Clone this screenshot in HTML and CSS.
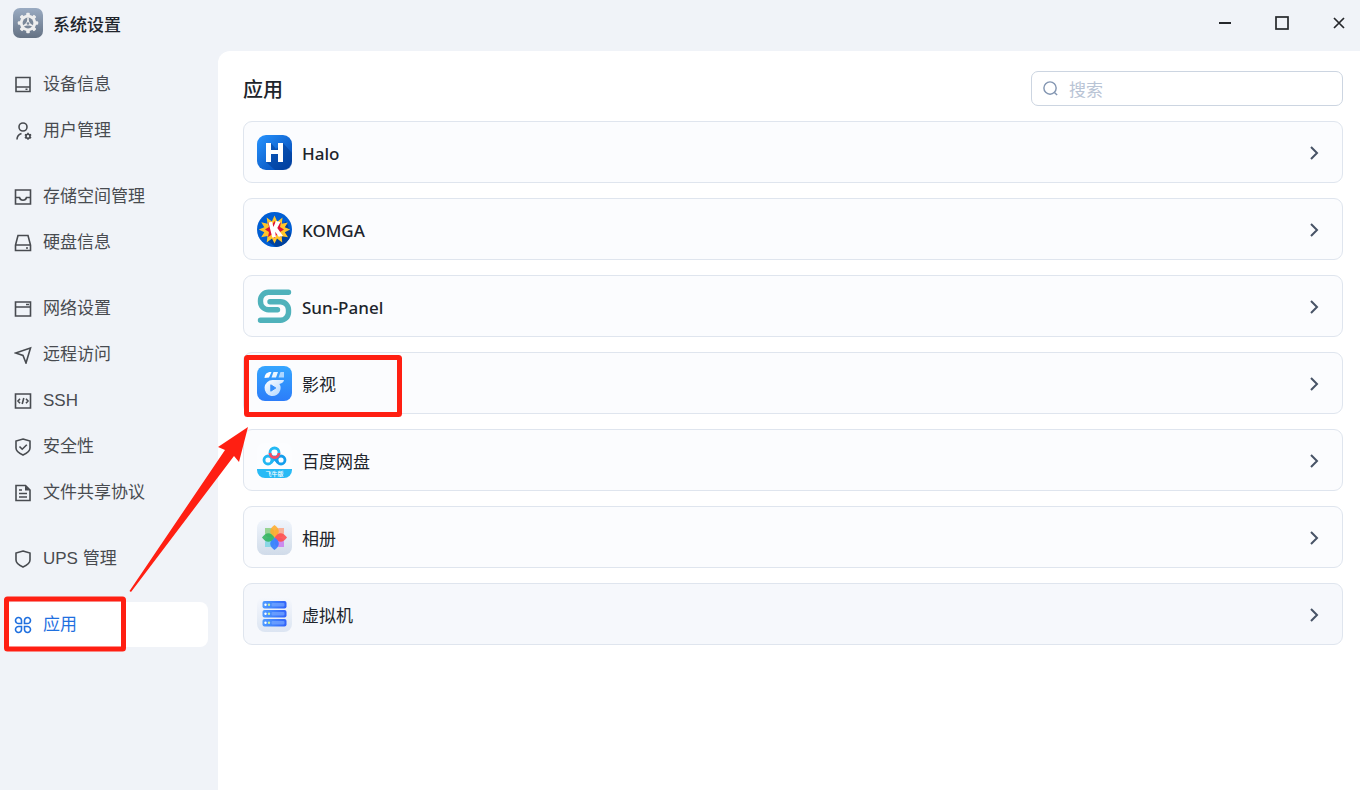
FILE: index.html
```html
<!DOCTYPE html>
<html lang="zh-CN">
<head>
<meta charset="utf-8">
<meta name="viewport" content="width=device-width, initial-scale=1">
<title>系统设置</title>
<link rel="stylesheet" href="styles.css">
</head>
<body>
<div class="window">
  <header class="titlebar">
    <svg class="app-logo" viewBox="0 0 30 30" aria-hidden="true">
      <defs><linearGradient id="logo-bg" x1="0" y1="0" x2="0" y2="1"><stop offset="0" stop-color="#9aabc2"/><stop offset="1" stop-color="#657284"/></linearGradient></defs>
      <rect width="30" height="30" rx="7" fill="url(#logo-bg)"/>
      <g fill="#eeeeee">
        <g id="teeth"><rect x="13.2" y="4.800" width="3.600" height="20.400" rx="1"/><rect x="4.800" y="13.200" width="20.400" height="3.600" rx="1"/></g>
        <use href="#teeth" transform="rotate(45 15 15)"/>
        <circle cx="15" cy="15" r="8.200"/>
      </g>
      <circle cx="15" cy="15" r="5.400" fill="#7a8798"/>
      <path d="M15 9.500v4M10.300 18l3.500-2M19.700 18l-3.500-2" fill="none" stroke="#eee" stroke-width="1.600"/>
      <path d="M15 11.500 18.500 17.600H11.500z" fill="#eee"/>
      <circle cx="15" cy="15.500" r="1.300" fill="#7a8798"/>
    </svg>
    <h1 class="window-title">系统设置</h1>
    <div class="window-controls">
      <button class="control" type="button" aria-label="最小化"><svg viewBox="0 0 16 16"><path d="M2 8h12" stroke-width="2"/></svg></button>
      <button class="control" type="button" aria-label="最大化"><svg viewBox="0 0 16 16"><rect x="2" y="2" width="12" height="12" stroke-width="1.700"/></svg></button>
      <button class="control" type="button" aria-label="关闭"><svg viewBox="0 0 16 16"><path d="M3 3l10 10M13 3 3 13" stroke-width="1.700"/></svg></button>
    </div>
  </header>

  <nav class="sidebar" aria-label="设置">
    <div class="nav-group">
      <a class="nav-item" href="#device"><svg class="nav-icon" viewBox="0 0 18 18"><path d="M2 1.500h14v14H2zM2 11h14M11.500 13.300h2"/></svg>设备信息</a>
      <a class="nav-item" href="#users"><svg class="nav-icon" viewBox="0 0 18 18"><circle cx="9" cy="5" r="4"/><path d="M3 17.500c0-3 1.500-5 4.500-6"/><path d="M14 10.700v1.600M14 16.200v1.600M10.900 12.500l1.400.8M15.700 15.200l1.400.8M17.100 12.500l-1.400.8M12.300 15.200l-1.400.8"/><circle cx="14" cy="14.200" r="2"/></svg>用户管理</a>
    </div>
    <div class="nav-group">
      <a class="nav-item" href="#storage"><svg class="nav-icon" viewBox="0 0 18 18"><path d="M1.500 2h15v14h-15zM1.500 9.500h4c.5 2 1.800 2.700 3.500 2.700s3-.7 3.500-2.700h4"/></svg>存储空间管理</a>
      <a class="nav-item" href="#disk"><svg class="nav-icon" viewBox="0 0 18 18"><path d="M4 1.500h10l2.500 9.500v5.500h-15V11zM1.500 11h15M12 14h2"/></svg>硬盘信息</a>
    </div>
    <div class="nav-group">
      <a class="nav-item" href="#network"><svg class="nav-icon" viewBox="0 0 18 18"><path d="M1.500 2h15v14h-15zM1.500 7h15M12 4.500h3"/></svg>网络设置</a>
      <a class="nav-item" href="#remote"><svg class="nav-icon" viewBox="0 0 18 18"><path d="M16.500 2 12 17 9 9.500 1.500 7z"/></svg>远程访问</a>
      <a class="nav-item" href="#ssh"><svg class="nav-icon" viewBox="0 0 18 18"><path d="M1.500 2h15v14h-15zM6 6.800 4 9l2 2.200M12 6.800 14 9l-2 2.200M9.800 6 8.200 12"/></svg>SSH</a>
      <a class="nav-item" href="#security"><svg class="nav-icon" viewBox="0 0 18 18"><path d="M9 1 16 3v7c0 3-2.500 5-7 7-4.500-2-7-4-7-7V3zM5.500 8.500l2.700 2.700 4.600-4.500"/></svg>安全性</a>
      <a class="nav-item" href="#sharing"><svg class="nav-icon" viewBox="0 0 18 18"><path d="M2 1.500h9.500L16 6v10.500H2zM5 6h3M5 9.500h8M5 13h8"/><path class="solid" d="M11 1.500 16 6.500h-5z"/></svg>文件共享协议</a>
    </div>
    <div class="nav-group">
      <a class="nav-item" href="#ups"><svg class="nav-icon" viewBox="0 0 18 18"><path d="M9 1 16 3v7c0 3-2.500 5-7 7-4.500-2-7-4-7-7V3z"/></svg>UPS 管理</a>
    </div>
    <div class="nav-group">
      <a class="nav-item active" href="#apps" aria-current="page"><svg class="nav-icon" viewBox="0 0 18 18"><path d="M7.500 7.500H4.700a3 3 0 1 1 2.800-3zM10.500 7.500h2.800a3 3 0 1 0-2.800-3zM7.500 10.500H4.700a3 3 0 1 0 2.800 3zM10.500 10.500h2.800a3 3 0 1 1-2.800 3z"/></svg>应用</a>
    </div>
  </nav>

  <main class="content">
    <div class="content-head">
      <h2 class="page-title">应用</h2>
      <label class="search">
        <svg class="search-icon" viewBox="0 0 18 18" aria-hidden="true"><circle cx="8.500" cy="8.500" r="6.500"/><path d="M13.200 13.200 16 16"/></svg>
        <input class="search-input" type="search" placeholder="搜索" aria-label="搜索">
      </label>
    </div>
    <div class="app-list">
      <button class="app-card" type="button">
        <svg class="app-icon" viewBox="0 0 35 35"><defs><linearGradient id="halo" x1="0" y1="0" x2="1" y2="1"><stop offset="0" stop-color="#2794ff"/><stop offset="1" stop-color="#0043ae"/></linearGradient></defs><rect width="35" height="35" rx="9" fill="url(#halo)"/><path d="M14 8 19 14 26 8 35 18v8q0 9-9 9H18L9 27z" fill="#003b91" opacity=".55"/><path d="M9 8h5v7h7V8h5v19h-5v-8h-7v8H9z" fill="#fff"/></svg>
        <span class="app-name" lang="en">Halo</span><svg class="chevron" viewBox="0 0 16 16"><path d="m5 3 6 6-6 6"/></svg>
      </button>
      <button class="app-card" type="button">
        <svg class="app-icon" viewBox="0 0 35 35"><circle cx="17.500" cy="17.500" r="17.500" fill="#005ed3"/><path d="m29 9 5 13q-3 12-15 13l-9-6z" fill="#00429d"/><path d="m17.500 3.500 2.800 6.300 5.200-4.300-.7 6.300 6-1.300-3 4.800 5.400 2.200-5.400 2.700 3.200 5-6.300-.9.500 6.200-5.200-4-2.500 5-2.500-5-5.300 4 .8-6.400-6.300 1.100 3.100-5-5.500-2.700 5.500-2.300-3-5 6.200 1.500-.8-6.200 5.200 4.100z" fill="#ffc52b"/><path d="m17.500 9 2.300 4 4.200-3-1 5 4 2.500-4 2.400 1 5.100-4-2.500-2.500 3.500-2.500-3.500-4 2.500 1-5-4-2.500 4-2.500-1-5 4 3z" fill="#dd1238"/><path d="m11.500 10.500 3.600-.8 1.300 5.300 2.600-6 4.500 1-3.200 5.900 5.700 8.100-4.300.8-3.500-5 .7 5.200-3.600.6z" fill="#fff"/></svg>
        <span class="app-name" lang="en">KOMGA</span><svg class="chevron" viewBox="0 0 16 16"><path d="m5 3 6 6-6 6"/></svg>
      </button>
      <button class="app-card" type="button">
        <svg class="app-icon" viewBox="0 0 35 35"><path d="M31.500 3.200H11.500a8 8 0 0 0-8 8v1.600a8 8 0 0 0 8 8h9M13 12.700H23.500a8 8 0 0 1 8 8v2.600a8 8 0 0 1-8 8H3.500" fill="none" stroke="#4fb2bb" stroke-width="5.400" stroke-linecap="round"/></svg>
        <span class="app-name" lang="en">Sun-Panel</span><svg class="chevron" viewBox="0 0 16 16"><path d="m5 3 6 6-6 6"/></svg>
      </button>
      <button class="app-card" type="button">
        <svg class="app-icon" viewBox="0 0 35 35"><defs><linearGradient id="video" x1="0" y1="0" x2="0" y2="1"><stop offset="0" stop-color="#35a5ff"/><stop offset="1" stop-color="#2c7df9"/></linearGradient><linearGradient id="disc" x1="0" y1="0" x2="1" y2="1"><stop stop-color="#fff"/><stop offset="1" stop-color="#add4ff"/></linearGradient></defs><rect width="35" height="35" rx="8" fill="url(#video)"/><path d="M7.500 12c.2-3.700 2.500-6 6-6h1L12 11.500z" fill="#fff"/><path d="M14.500 11.500 16.500 6H21l-2 5.500z" fill="#eaf5ff"/><path d="m21.500 11.500 2-5.500h3.500v5.500z" fill="#add7ff"/><path d="M27 14H15.500a8 8 0 1 0 7.800 10c.8-3 0-4.800-1-6 2.300-.3 4.200-1.500 4.700-4z" fill="url(#disc)"/><path d="m13.800 18.800 5 3.200-5 3.200z" fill="#348dfa" stroke="#348dfa" stroke-linejoin="round"/></svg>
        <span class="app-name">影视</span><svg class="chevron" viewBox="0 0 16 16"><path d="m5 3 6 6-6 6"/></svg>
      </button>
      <button class="app-card" type="button">
        <svg class="app-icon" viewBox="0 0 35 35"><defs><clipPath id="round"><rect width="35" height="35" rx="8"/></clipPath></defs><g clip-path="url(#round)"><rect width="35" height="35" fill="#fcfdff"/><path d="M0 26h35v9H0z" fill="#28baf5"/></g><g fill="none" stroke-width="2.800"><circle cx="11" cy="17" r="4" stroke="#22b7f3"/><circle cx="24" cy="17" r="4" stroke="#159eed"/><path d="M14 19.500 19 14" stroke="#22b7f3"/><path d="M21 19.500 16 14" stroke="#159eed"/><circle cx="17.500" cy="9.500" r="4.500" stroke="#24b9f4" fill="#fff"/><path d="M13 10a4.500 4.500 0 0 0 9 0" stroke="#f34d67"/></g><text class="ribbon-label" x="17.500" y="33" text-anchor="middle">飞牛版</text></svg>
        <span class="app-name">百度网盘</span><svg class="chevron" viewBox="0 0 16 16"><path d="m5 3 6 6-6 6"/></svg>
      </button>
      <button class="app-card" type="button">
        <svg class="app-icon" viewBox="0 0 35 35"><defs><linearGradient id="tile" x1="0" y1="0" x2="0" y2="1"><stop stop-color="#f0f5fc"/><stop offset="1" stop-color="#d0dbe9"/></linearGradient><path id="petal" d="M17.500 17.500c-6-4-5.500-8.500 0-12.500 5.500 4 6 8.500 0 12.500z"/><path id="corner" d="M17.500 17.500H12q-4-1-4-5V8h4.500q5 0 5 5z"/></defs><rect width="35" height="35" rx="8" fill="url(#tile)"/><g opacity=".75"><use href="#corner" fill="#7bcb72"/><use href="#corner" fill="#ff9c77" transform="rotate(90 17.500 17.500)"/><use href="#corner" fill="#c86ff0" transform="rotate(180 17.500 17.500)"/><use href="#corner" fill="#70d2e3" transform="rotate(270 17.500 17.500)"/></g><g opacity=".88"><use href="#petal" fill="#ffad2c"/><use href="#petal" fill="#ff4d4d" transform="rotate(90 17.500 17.500)"/><use href="#petal" fill="#337eff" transform="rotate(180 17.500 17.500)"/><use href="#petal" fill="#32b562" transform="rotate(270 17.500 17.500)"/></g></svg>
        <span class="app-name">相册</span><svg class="chevron" viewBox="0 0 16 16"><path d="m5 3 6 6-6 6"/></svg>
      </button>
      <button class="app-card highlighted" type="button">
        <svg class="app-icon" viewBox="0 0 35 35"><defs><linearGradient id="vm-tile" x1="0" y1="0" x2="0" y2="1"><stop stop-color="#f6f8fd"/><stop offset="1" stop-color="#dce5f2"/></linearGradient><linearGradient id="rack"><stop stop-color="#4e9cff"/><stop offset="1" stop-color="#3163f9"/></linearGradient><g id="server"><rect x="5.500" y="4" width="24" height="7.500" rx="2" fill="url(#rack)"/><rect x="14.500" y="6" width="13" height="3.500" rx="1" fill="#78a8ff" opacity=".7"/><circle cx="8.500" cy="7.800" r="1.200" fill="#fff"/><circle cx="12" cy="7.800" r="1.200" fill="#c9f2a0"/></g></defs><rect width="35" height="35" rx="8" fill="url(#vm-tile)"/><use href="#server"/><use href="#server" y="9"/><use href="#server" y="18"/></svg>
        <span class="app-name">虚拟机</span><svg class="chevron" viewBox="0 0 16 16"><path d="m5 3 6 6-6 6"/></svg>
      </button>
    </div>
  </main>

  <svg class="annotation" width="410" height="660" viewBox="0 0 410 660" aria-hidden="true">
    <rect x="6.500" y="599" width="117" height="50" rx="1"/>
    <rect x="246.500" y="357.500" width="153" height="57" rx="1"/>
    <path d="M248 427 218 447 225 450 129.500 591 131 592 234 456 239 462z"/>
  </svg>
</div>
</body>
</html>
```

FILE: styles.css
```css
* { box-sizing: border-box; }

body {
  margin: 0;
  font-family: "Noto Sans", "Noto Sans CJK SC", sans-serif;
  font-size: 17px;
  line-height: 24px;
  color: #20242b;
  background: #f0f3f8;
}

button, input { font: inherit; color: inherit; }

.window {
  position: relative;
  display: grid;
  grid-template-columns: 218px 1fr;
  grid-template-rows: 51px 1fr;
  min-height: 100vh;
}

.titlebar {
  grid-column: 1 / -1;
  display: flex;
  align-items: center;
  gap: 10px;
  padding: 0 13px 5px;
}

.app-logo { width: 30px; height: 30px; }

.window-title {
  margin: 0;
  padding-top: 3px;
  font-size: 17px;
  font-weight: 500;
}

.window-controls { display: flex; gap: 41px; margin-left: auto; }

.control {
  display: flex;
  padding: 0;
  border: 0;
  background: none;
}

.control svg {
  width: 16px;
  height: 16px;
  fill: none;
  stroke: #25272b;
}

.sidebar {
  display: flex;
  flex-direction: column;
  gap: 21px;
  padding: 11px 10px 20px 5px;
}

.nav-group { display: flex; flex-direction: column; gap: 1px; }

.nav-item {
  display: flex;
  align-items: center;
  gap: 11px;
  height: 45px;
  padding-left: 9px;
  border-radius: 8px;
  color: #484b50;
  font-family: "Liberation Sans", "Noto Sans CJK SC", sans-serif;
  text-decoration: none;
}

.nav-icon {
  width: 18px;
  height: 18px;
  fill: none;
  stroke: currentColor;
  stroke-width: 1.6;
}

.nav-icon .solid { fill: currentColor; stroke: none; }

.nav-item.active { background: #fff; color: #1f70df; }

.content {
  padding: 20px 17px 20px 25px;
  border-top-left-radius: 12px;
  background: #fff;
}

.content-head {
  display: flex;
  align-items: center;
  justify-content: space-between;
  margin-bottom: 15px;
}

.page-title {
  margin: 0;
  padding-top: 2px;
  font-size: 20px;
  font-weight: 500;
}

.search {
  display: flex;
  align-items: center;
  gap: 10px;
  width: 312px;
  height: 35px;
  padding: 0 10px;
  border: 1px solid #ccd5e1;
  border-radius: 7px;
}

.search-icon {
  flex: none;
  width: 17px;
  height: 17px;
  fill: none;
  stroke: #8295b1;
  stroke-width: 1.5;
}

.search-input {
  flex: 1;
  min-width: 0;
  padding: 2px 0 0;
  border: 0;
  outline: 0;
  background: none;
}

.search-input::placeholder { color: #b9c4d5; }

.app-list { display: flex; flex-direction: column; gap: 15px; }

.app-card {
  display: flex;
  align-items: center;
  gap: 10px;
  width: 100%;
  height: 62px;
  padding: 0 20px 0 13px;
  border: 1px solid #dfe5ee;
  border-radius: 9px;
  background: #fbfcfe;
  text-align: left;
}

.app-card.highlighted { background: #f6f8fc; }

.app-icon { width: 35px; height: 35px; }

.app-name { flex: 1; padding-top: 3px; }

.app-name:lang(en) { font-weight: 500; }

.ribbon-label { fill: #fff; font-size: 6px; font-weight: 500; }

.chevron {
  width: 16px;
  height: 16px;
  fill: none;
  stroke: #475366;
  stroke-width: 2;
}

.annotation {
  position: absolute;
  top: 0;
  left: 0;
  pointer-events: none;
}

.annotation rect { fill: none; stroke: #ff1f12; stroke-width: 5; }

.annotation path { fill: #ff1f12; }
```
